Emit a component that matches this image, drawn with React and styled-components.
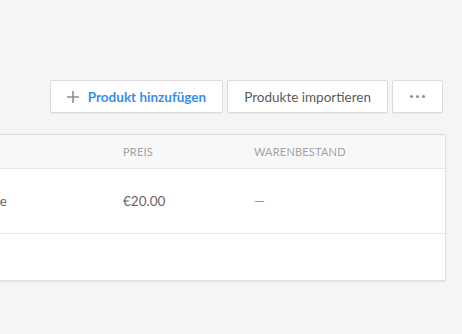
import React from 'react';
import styled, { createGlobalStyle } from 'styled-components';

const GlobalStyle = createGlobalStyle`
  html, body {
    margin: 0;
    padding: 0;
    background: #f5f5f5;
    font-family: Lato, "Liberation Sans", sans-serif;
    overflow: hidden;
  }
`;

const Page = styled.div`
  width: 462px;
  height: 334px;
  padding-top: 80px;
  box-sizing: border-box;
`;

const Toolbar = styled.div`
  display: flex;
  justify-content: flex-end;
  gap: 4px;
  padding-right: 19px;
`;

const Button = styled.button`
  display: flex;
  align-items: center;
  justify-content: center;
  gap: 9px;
  height: 33px;
  padding: 0 ${props => props.$pad || 16}px;
  background: #fff;
  border: 1px solid #dcdcdc;
  border-radius: 2px;
  box-shadow: 0 1px 1px rgba(0, 0, 0, 0.05);
  font-family: inherit;
  font-size: 13.5px;
  font-weight: ${props => (props.$primary ? 700 : 400)};
  color: ${props => (props.$primary ? '#3a8ee6' : '#5c5c5c')};
  cursor: pointer;
`;

const Dots = styled.span`
  display: flex;
  gap: 3px;

  span {
    width: 3px;
    height: 3px;
    border-radius: 50%;
    background: #8a8f99;
  }
`;

const Table = styled.div`
  margin: 21px 16px 0 -150px;
  background: #fff;
  border: 1px solid #dedede;
  border-radius: 2px;
  box-shadow: 0 1px 2px rgba(0, 0, 0, 0.08);
`;

const Row = styled.div`
  display: grid;
  grid-template-columns: 272px 131px 1fr;
  align-items: center;
  height: ${props => props.$height}px;
  background: ${props => (props.$head ? '#f8f8f8' : '#fff')};
  border-bottom: ${props => (props.$last ? 'none' : '1px solid #e6e6e6')};
`;

const HeadCell = styled.div`
  font-size: 11px;
  letter-spacing: 0.2px;
  color: #a3a3a3;
  text-transform: uppercase;
`;

const Cell = styled.div`
  font-size: 13.5px;
  color: ${props => (props.$muted ? '#999' : '#666')};
  white-space: nowrap;
  text-align: ${props => props.$align || 'left'};
  padding-right: ${props => props.$pr || 0}px;
`;

const App = () => (
  <>
    <GlobalStyle />
    <Page>
      <Toolbar>
        <Button $primary $pad={16}>
          <svg width="12" height="12" viewBox="0 0 12 12">
            <path d="M6 0v12M0 6h12" stroke="#8a8f99" strokeWidth="1.6" />
          </svg>
          Produkt hinzufügen
        </Button>
        <Button>Produkte importieren</Button>
        <Button $pad={17}>
          <Dots>
            <span />
            <span />
            <span />
          </Dots>
        </Button>
      </Toolbar>
      <Table>
        <Row $head $height={33}>
          <HeadCell />
          <HeadCell>Preis</HeadCell>
          <HeadCell>Warenbestand</HeadCell>
        </Row>
        <Row $height={64}>
          <Cell $align="right" $pr={116}>Tasse</Cell>
          <Cell>€20.00</Cell>
          <Cell $muted>—</Cell>
        </Row>
        <Row $last $height={46} />
      </Table>
    </Page>
  </>
);

export default App;
